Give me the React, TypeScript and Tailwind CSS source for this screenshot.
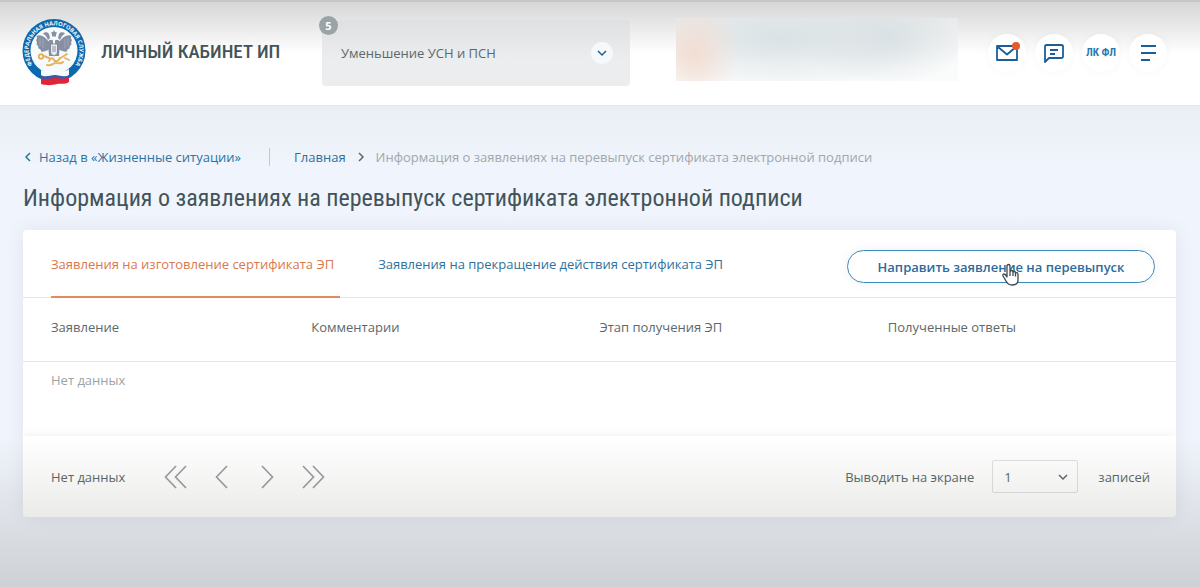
import { useState } from "react";

const tabs = ["Заявления на изготовление сертификата ЭП", "Заявления на прекращение действия сертификата ЭП"];
const columns = ["Заявление", "Комментарии", "Этап получения ЭП", "Полученные ответы"];

const pager = [
  { label: "Первая страница", path: "M13 1 2.500 12 13 23M23 1 12.500 12 23 23" },
  { label: "Предыдущая страница", path: "M18 1 7.500 12 18 23" },
  { label: "Следующая страница", path: "M7 1 17.500 12 7 23" },
  { label: "Последняя страница", path: "M2 1 12.500 12 2 23M12 1 22.500 12 12 23" },
];

function Logo() {
  return (
    <svg viewBox="0 0 64 68" className="h-[68px] w-16 shrink-0" aria-label="Федеральная налоговая служба">
      <defs>
        <path id="ring" d="M14.500 51.500A25.500 25.500 0 1 1 49.500 51.500" />
      </defs>
      <circle cx="32" cy="32.500" r="31.500" fill="#0c69ae" />
      <circle cx="32" cy="32.500" r="23.500" fill="#f7fafb" />
      <text fill="#eef6fb" fontSize="5.800" fontWeight="700" fontFamily="Open Sans, sans-serif">
        <textPath href="#ring" startOffset="50%" textAnchor="middle">ФЕДЕРАЛЬНАЯ НАЛОГОВАЯ СЛУЖБА</textPath>
      </text>
      {/* eagle */}
      <g fill="#8790a3">
        <path d="M27 24C23 19 19 16 14.500 18c1 2 .5 3-.5 4 1 1.500 1 3 .5 4.500 1.500 1 2 2.500 2 4 2 .5 2.500 1.500 3 3.500 3-.5 5.500-1 8-3z" />
        <path d="M37 24c4-5 8-8 12.500-6-1 2-.5 3 .5 4-1 1.500-1 3-.5 4.500-1.500 1-2 2.500-2 4-2 .5-2.500 1.500-3 3.500-3-.5-5.500-1-8-3z" />
        <path d="M26 24c1-2 3-3 5-1.500V38h-4zM38 24c-1-2-3-3-5-1.500V38h4z" />
        <path d="M21 15.500c2-2 5-1.500 6 .5l1 4-2 2-2-4zM43 15.500c-2-2-5-1.500-6 .5l-1 4 2 2 2-4z" />
        <path d="m32 12 1 2 2 .5-1 2v2h-4v-2l-1-2 2-.5z" />
      </g>
      <path d="M18 20v8M21 21v9M43 21v9M46 20v8" stroke="#a5acba" strokeWidth=".8" />
      <path d="M28.500 26h7v8c0 2-2 3-3.500 4-1.500-1-3.500-2-3.500-4z" fill="#e9edf1" stroke="#7f8798" />
      <path d="M31 28v6M33 28v6" stroke="#8790a3" />
      <g fill="none" stroke="#e3b45c" strokeWidth="1.900" strokeLinecap="round">
        <circle cx="19" cy="38.500" r="2.200" />
        <path d="m22 38 5 2M45 36l-8 5M43 40l4 2M27 43c2-4 4-3 5-1s4 2 6-2M25 47c4 1 6-1 8-2s5 2 8-1" />
      </g>
      <path d="M19 52c5 3 8-1 14 0s9 3 14-1v6c-5 4-9 2-14 1s-9 3-14 0z" fill="#f8fafc" />
      <path d="M19 57c5 3 9 0 14 0s9 3 14 0v4c-5 3-9 1-14 1s-9 2-14 0z" fill="#2f5faf" />
      <path d="M19 60c5 2 9 0 14 0s9 2 14-1v5c-5 3-8 1-12 2s-10 2-16 0z" fill="#df2638" />
    </svg>
  );
}

function Chevron({ className }: { className: string }) {
  return (
    <svg viewBox="0 0 10 10" fill="none" stroke="currentColor" strokeWidth="1.500" className={className} aria-hidden="true">
      <path d="m1 3 4 4 4-4" />
    </svg>
  );
}

const roundButton = "relative flex size-[38px] items-center justify-center rounded-full bg-white text-[#1a5f99] shadow-[0_0_8px_rgba(0,0,0,0.04)]";

export default function App() {
  const [active, setActive] = useState(0);

  return (
    <div className="relative min-h-screen bg-[#f0f4fc] font-['Open_Sans',sans-serif] text-[13px] leading-5 text-[#5b696c]">
      <header className="flex h-[105px] items-start border-t-2 border-[#c6c6c6] bg-linear-to-b from-[#d6d6d6] to-white to-50% pr-[33px] pl-[22px]">
        <a href="#" className="mt-4 flex items-center gap-[15px]">
          <Logo />
          <span className="w-[221px] text-[19px] leading-8 font-medium whitespace-nowrap text-[#42545a] font-['Roboto_Condensed',Roboto,sans-serif]">ЛИЧНЫЙ КАБИНЕТ ИП</span>
        </a>
        <button type="button" className="relative mt-[18px] flex h-[66px] w-[308px] items-center justify-between rounded bg-linear-to-b from-[#dfe0e1] to-[#ebedef] to-60% pr-[17px] pl-[19px]">
          <span>Уменьшение УСН и ПСН</span>
          <span className="flex size-[22px] items-center justify-center rounded-full bg-[#f5f9fc] text-[#1a6199]">
            <Chevron className="size-[10px]" />
          </span>
          <span className="absolute -top-1 -left-[3px] flex size-[19px] items-center justify-center rounded-full bg-[#9aa3a5] text-[11px] font-bold text-white">5</span>
        </button>
        <div className="mt-4 ml-[46px] h-[63px] w-[282px] bg-[radial-gradient(ellipse_45px_55px_at_18px_34px,#f2ddd2,transparent),radial-gradient(ellipse_90px_48px_at_210px_18px,#dae1e4,transparent),radial-gradient(ellipse_150px_52px_at_105px_20px,#d9e2e5,transparent),linear-gradient(#ebecec,#fafbfb_70%)]" />
        <nav className="mt-8 ml-auto flex gap-[9px]">
          <button type="button" aria-label="Сообщения" className={roundButton}>
            <svg viewBox="0 0 24 24" fill="none" stroke="currentColor" strokeWidth="1.800" className="size-6 overflow-visible">
              <path d="M2 5h20v14H2zM2.500 5.500l9.500 8 9.500-8" strokeLinejoin="round" />
              <circle cx="21" cy="5" r="4" fill="#e8592b" stroke="none" />
            </svg>
          </button>
          <button type="button" aria-label="Чат" className={roundButton}>
            <svg viewBox="0 0 24 24" fill="none" stroke="currentColor" strokeWidth="1.800" className="size-6">
              <path d="M4.500 4H19q2 0 2 1.500v10q0 1.500-2 1.500H7l-4 4V5.500Q3 4 4.500 4zM8 9h8M8 13h5" strokeLinejoin="round" />
            </svg>
          </button>
          <button type="button" className={roundButton}>
            <span className="text-[11px] font-bold whitespace-nowrap text-[#2b79ae] font-['Roboto_Condensed',Roboto,sans-serif]">ЛК ФЛ</span>
          </button>
          <button type="button" aria-label="Меню" className={roundButton}>
            <svg viewBox="0 0 24 24" fill="none" stroke="currentColor" strokeWidth="1.800" className="size-6">
              <path d="M5 5h15M5 12h15M5 19h9" />
            </svg>
          </button>
        </nav>
      </header>

      <main className="border-t border-[#e3e8ee] bg-linear-to-b from-[#e9eff5] to-[#f0f4fc] to-[60px] pt-[41px] pr-6 pb-[70px] pl-[23px]">
        <nav className="flex items-center">
          <a href="#" className="flex items-center gap-[6px] text-[#2a74a5]">
            <Chevron className="size-[10px] rotate-90" />
            Назад в «Жизненные ситуации»
          </a>
          <span className="mr-6 ml-7 h-[18px] w-px bg-[#c3c9ce]" />
          <a href="#" className="text-[#2d6f9c]">Главная</a>
          <Chevron className="mx-[10px] size-[10px] -rotate-90" />
          <span className="text-[#a0a8ac]">Информация о заявлениях на перевыпуск сертификата электронной подписи</span>
        </nav>
        <h1 className="mt-[15px] text-[24px] leading-8 text-[#42545a] font-['Roboto_Condensed',Roboto,sans-serif]">
          Информация о заявлениях на перевыпуск сертификата электронной подписи
        </h1>

        <section className="mt-4 overflow-hidden rounded bg-white shadow-[0_0_20px_rgba(0,0,0,0.07)]">
          <div className="flex h-[68px] items-stretch border-b border-[#e2e4e5] pr-[21px] pl-7">
            <div role="tablist" className="flex gap-[38px]">
              {tabs.map((tab, i) => (
                <button
                  key={tab}
                  type="button"
                  role="tab"
                  aria-selected={active === i}
                  onClick={() => setActive(i)}
                  className={`-mb-px border-b-2 pt-[2px] pr-[6px] text-left ${active === i ? "border-[#e58a5c] text-[#d9784e]" : "border-transparent text-[#2f719c]"}`}
                >
                  {tab}
                </button>
              ))}
            </div>
            <button type="button" className="relative mt-5 ml-auto h-[33px] w-[308px] rounded-full border border-[#3988b8] font-semibold text-[#2c6b9c] shadow-[0_0_12px_rgba(0,0,0,0.06)]">
              Направить заявление на перевыпуск
              {/* hand pointer */}
              <svg viewBox="0 0 20 24" className="absolute top-3 left-[153px] h-6 w-5" fill="#fff" stroke="#3c4850" strokeWidth="1.300" strokeLinejoin="round" aria-hidden="true">
                <path d="M6 14V3q0-1.500 1.500-1.500T9 3v6q0-1.500 1.500-1.500T12 9v1q0-1.500 1.300-1.500T14.500 10v1q0-1.300 1.200-1.300T17 11.500V17q0 5-6 5-4 0-6-4l-3-5q-.5-2 1-2T6 14zM9 9v4M12 10v3M14.500 11v2.500" />
              </svg>
            </button>
          </div>
          <table className="w-full table-fixed text-left">
            <thead>
              <tr className="h-[63px] border-b border-[#e2e4e5]">
                {columns.map((column) => (
                  <th key={column} className="pb-1 font-normal first:pl-7">{column}</th>
                ))}
              </tr>
            </thead>
            <tbody>
              <tr className="h-[75px] align-top">
                <td colSpan={4} className="pt-2 pl-7 text-[#9ca3a5]">Нет данных</td>
              </tr>
            </tbody>
          </table>
          <footer className="flex h-[81px] items-center pr-[26px] pl-7 shadow-[0_-2px_8px_rgba(0,0,0,0.05)]">
            <span>Нет данных</span>
            <div className="ml-[38px] flex gap-[22px]">
              {pager.map(({ label, path }) => (
                <button key={label} type="button" aria-label={label} className="text-[#9b9fa1]">
                  <svg viewBox="0 0 24 24" fill="none" stroke="currentColor" strokeWidth="1.700" className="size-6">
                    <path d={path} />
                  </svg>
                </button>
              ))}
            </div>
            <label htmlFor="pageSize" className="mr-[18px] ml-auto">Выводить на экране</label>
            <div className="relative">
              <select id="pageSize" className="h-[33px] w-[86px] appearance-none rounded-xs border border-[#dfe1e2] pl-[11px]">
                <option>1</option>
              </select>
              <Chevron className="pointer-events-none absolute top-3 right-[10px] size-[10px]" />
            </div>
            <span className="ml-5">записей</span>
          </footer>
        </section>
      </main>
      <div className="pointer-events-none absolute inset-x-0 bottom-0 h-[150px] bg-linear-to-b from-[#303020]/0 to-[#303020]/18" />
    </div>
  );
}
